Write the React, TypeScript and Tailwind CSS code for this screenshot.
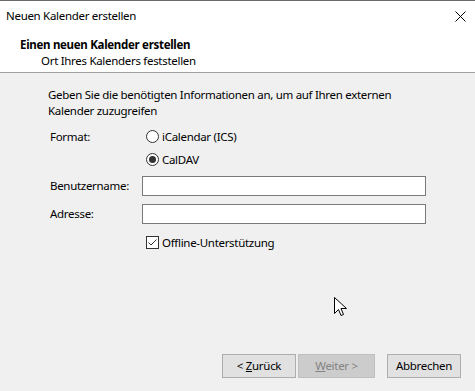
import React from 'react';

const font = { fontFamily: '"Segoe UI", "Noto Sans", "Open Sans", sans-serif' };

const Radio = ({ checked, label }: { checked?: boolean; label: string }) => (
  <label className="flex items-center h-[23px] pl-[4px]">
    <span className="w-[13px] h-[13px] rounded-full border border-[#333333] bg-white flex items-center justify-center">
      {checked && <span className="w-[7px] h-[7px] rounded-full bg-[#333333]" />}
    </span>
    <span className="ml-[3px]">{label}</span>
  </label>
);

const Button = ({ children, disabled }: { children: React.ReactNode; disabled?: boolean }) => (
  <button
    className={
      disabled
        ? 'h-[24px] w-[77px] border border-[#bfbfbf] bg-[#cccccc] text-[#838383]'
        : 'h-[24px] w-[74px] border border-[#adadad] bg-[#e1e1e1] text-black'
    }
  >
    {children}
  </button>
);

export default function App() {
  return (
    <div
      className="relative w-[475px] h-[391px] bg-[#f0f0f0] border-t border-[#6b6b6b] text-[11.5px] tracking-[-0.3px] text-black flex flex-col overflow-hidden"
      style={font}
    >
      <div className="bg-white border-b border-[#a0a0a0] h-[72px]">
        <div className="h-[30px] flex items-center justify-between pl-[6px] pr-[8px]">
          <span>Neuen Kalender erstellen</span>
          <svg width="11" height="11" viewBox="0 0 11 11" className="mr-[1px]">
            <path d="M0.5 0.5 L10.5 10.5 M10.5 0.5 L0.5 10.5" stroke="#000" strokeWidth="1" />
          </svg>
        </div>
        <div className="mt-[6px] pl-[20px] leading-[16px] font-bold">Einen neuen Kalender erstellen</div>
        <div className="pl-[41px] leading-[16px]">Ort Ihres Kalenders feststellen</div>
      </div>

      <div className="pt-[14px] pl-[48px] pr-[40px] leading-[16px]">
        <p>
          Geben Sie die benötigten Informationen an, um auf Ihren externen
          <br />
          Kalender zuzugreifen
        </p>

        <div className="mt-[6px] pl-[2px] grid grid-cols-[92px_284px]">
          <span className="h-[23px] flex items-center">Format:</span>
          <div className="flex flex-col">
            <Radio label="iCalendar (ICS)" />
            <Radio checked label="CalDAV" />
          </div>

          <span className="mt-[5px] h-[20px] flex items-center">Benutzername:</span>
          <input className="mt-[5px] h-[20px] border border-[#7a7a7a] bg-white outline-none" />

          <span className="mt-[8px] h-[20px] flex items-center">Adresse:</span>
          <input className="mt-[8px] h-[20px] border border-[#7a7a7a] bg-white outline-none" />

          <span />
          <label className="mt-[12px] h-[13px] flex items-center pl-[4px]">
            <span className="w-[13px] h-[13px] border border-[#333333] bg-white flex items-center justify-center">
              <svg width="11" height="11" viewBox="0 0 11 11">
                <path d="M1.5 5.5 L4 8 L9.5 2.5" fill="none" stroke="#333" strokeWidth="1" />
              </svg>
            </span>
            <span className="ml-[3px]">Offline-Unterstützung</span>
          </label>
        </div>
      </div>

      <div className="mt-auto mb-[13px] flex justify-end pr-[14px]">
        <Button>
          &lt; <span className="underline">Z</span>urück
        </Button>
        <div className="ml-[2px]">
          <Button disabled>
            <span className="underline">W</span>eiter &gt;
          </Button>
        </div>
        <div className="ml-[12px]">
          <Button>Abbrechen</Button>
        </div>
      </div>

      <svg className="absolute left-[334px] top-[296px]" width="13" height="20" viewBox="0 0 13 20">
        <path
          d="M0.5 0.5 L0.5 16.5 L4.5 12.5 L7 18.5 L9.5 17.5 L7 11.5 L12.5 11.5 Z"
          fill="#fff"
          stroke="#000"
          strokeWidth="1"
        />
      </svg>
    </div>
  );
}
